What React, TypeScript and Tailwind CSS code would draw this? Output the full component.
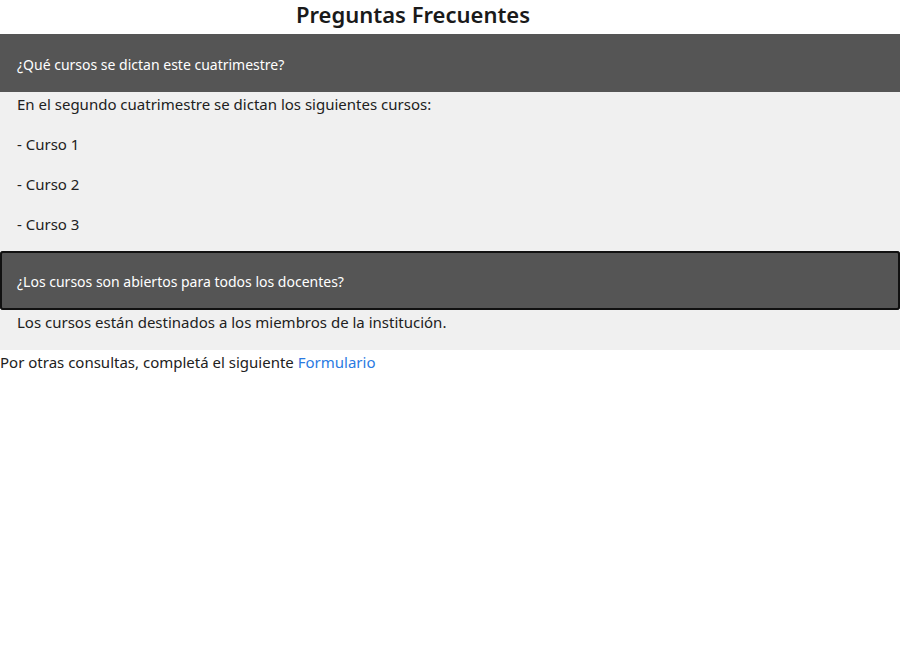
import { useState } from 'react'

interface Faq {
    question: string
    answer: string[]
}

const faqs: Faq[] = [
    {
        question: '¿Qué cursos se dictan este cuatrimestre?',
        answer: [
            'En el segundo cuatrimestre se dictan los siguientes cursos:',
            '- Curso 1',
            '- Curso 2',
            '- Curso 3'
        ]
    },
    {
        question: '¿Los cursos son abiertos para todos los docentes?',
        answer: ['Los cursos están destinados a los miembros de la institución.']
    }
]

export default function App() {
    const [focused] = useState(1)

    return (
        <div className="min-h-[650px] bg-white text-[#212121] font-['Noto_Sans','Open_Sans',sans-serif]">
            <h1 className="h-[34px] pr-[74px] text-center text-[22px] font-semibold leading-[28px] text-[#1a1a1a]">
                Preguntas Frecuentes
            </h1>
            {faqs.map((faq, i) => (
                <div key={faq.question}>
                    <button
                        type="button"
                        className={
                            'block w-full px-[17px] pt-[2px] bg-[#555555] text-left text-[14px] text-white ' +
                            (focused === i ? 'h-[59px] outline-2 -outline-offset-2 outline-[#111111] rounded-[3px]' : 'h-[58px]')
                        }
                    >
                        {faq.question}
                    </button>
                    <div
                        className={
                            'bg-[#f0f0f0] px-[17px] flex flex-col gap-[16px] ' +
                            (i === faqs.length - 1 ? 'pb-[16px]' : 'pb-[15px]')
                        }
                    >
                        {faq.answer.map(line => (
                            <p key={line} className="text-[15px] leading-[24px]">{line}</p>
                        ))}
                    </div>
                </div>
            ))}
            <p className="text-[15px] leading-[24px]">
                Por otras consultas, completá el siguiente{' '}
                <a href="#" className="text-[#2a7ae2]">Formulario</a>
            </p>
        </div>
    )
}
